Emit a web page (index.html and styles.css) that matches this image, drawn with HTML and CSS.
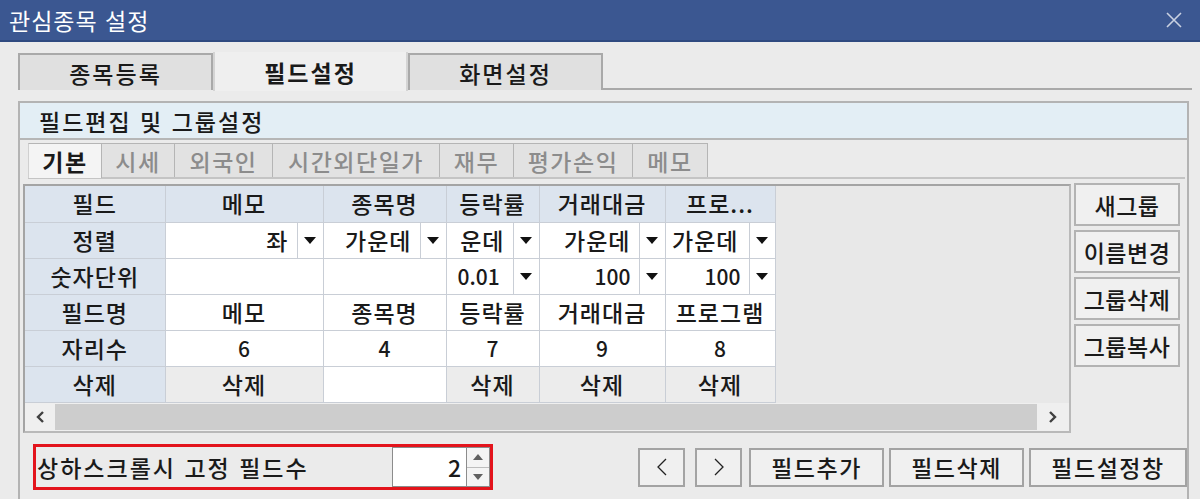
FILE: index.html
```html
<!DOCTYPE html>
<html lang="ko">
<head>
    <meta charset="UTF-8">
    <title>관심종목 설정</title>
    <link rel="stylesheet" href="styles.css">
</head>
<body>
    <div class="window">
        <div class="titlebar">
            <span class="title">관심종목 설정</span>
            <svg class="close" width="18" height="18" viewBox="0 0 18 18">
                <path d="M2 2 L16 16 M16 2 L2 16" stroke="#c9d1e2" stroke-width="1.6" fill="none"/>
            </svg>
        </div>

        <div class="tabs">
            <div class="tab">종목등록</div>
            <div class="tab active">필드설정</div>
            <div class="tab">화면설정</div>
        </div>

        <div class="panel">
            <div class="panel-head">필드편집 및 그룹설정</div>

            <div class="subtabs">
                <div class="subtab active" style="width: 74px">기본</div>
                <div class="subtab" style="width: 73px">시세</div>
                <div class="subtab" style="width: 98px">외국인</div>
                <div class="subtab" style="width: 167px">시간외단일가</div>
                <div class="subtab" style="width: 74px">재무</div>
                <div class="subtab" style="width: 119px">평가손익</div>
                <div class="subtab" style="width: 75px">메모</div>
            </div>

            <div class="editor">
                <div class="grid">
                    <div class="grid-body">
                        <table class="fields">
                            <colgroup>
                                <col style="width: 140px">
                                <col style="width: 158px">
                                <col style="width: 123px">
                                <col style="width: 93px">
                                <col style="width: 126px">
                                <col style="width: 110px">
                            </colgroup>
                            <tr class="head">
                                <th>필드</th>
                                <th>메모</th>
                                <th>종목명</th>
                                <th>등락률</th>
                                <th>거래대금</th>
                                <th>프로...</th>
                            </tr>
                            <tr>
                                <th>정렬</th>
                                <td class="combo"><div class="combo-box"><span class="combo-value">좌</span><span class="combo-arrow"></span></div></td>
                                <td class="combo"><div class="combo-box"><span class="combo-value">가운데</span><span class="combo-arrow"></span></div></td>
                                <td class="combo"><div class="combo-box"><span class="combo-value">운데</span><span class="combo-arrow"></span></div></td>
                                <td class="combo"><div class="combo-box"><span class="combo-value">가운데</span><span class="combo-arrow"></span></div></td>
                                <td class="combo"><div class="combo-box"><span class="combo-value tight">가운데</span><span class="combo-arrow"></span></div></td>
                            </tr>
                            <tr>
                                <th>숫자단위</th>
                                <td></td>
                                <td></td>
                                <td class="combo"><div class="combo-box"><span class="combo-value left num">0.01</span><span class="combo-arrow"></span></div></td>
                                <td class="combo"><div class="combo-box"><span class="combo-value num">100</span><span class="combo-arrow"></span></div></td>
                                <td class="combo"><div class="combo-box"><span class="combo-value num">100</span><span class="combo-arrow"></span></div></td>
                            </tr>
                            <tr>
                                <th>필드명</th>
                                <td>메모</td>
                                <td>종목명</td>
                                <td>등락률</td>
                                <td>거래대금</td>
                                <td>프로그램</td>
                            </tr>
                            <tr>
                                <th>자리수</th>
                                <td class="num">6</td>
                                <td class="num">4</td>
                                <td class="num">7</td>
                                <td class="num">9</td>
                                <td class="num">8</td>
                            </tr>
                            <tr>
                                <th>삭제</th>
                                <td class="del">삭제</td>
                                <td></td>
                                <td class="del">삭제</td>
                                <td class="del">삭제</td>
                                <td class="del">삭제</td>
                            </tr>
                        </table>
                    </div>
                    <div class="hscroll">
                        <div class="scroll-btn">
                            <svg width="10" height="14" viewBox="0 0 10 14"><path d="M8 2 L3 7 L8 12" stroke="#404040" stroke-width="2.4" fill="none"/></svg>
                        </div>
                        <div class="scroll-thumb"></div>
                        <div class="scroll-btn">
                            <svg width="10" height="14" viewBox="0 0 10 14"><path d="M2 2 L7 7 L2 12" stroke="#404040" stroke-width="2.4" fill="none"/></svg>
                        </div>
                    </div>
                </div>

                <div class="side-buttons">
                    <button class="btn">새그룹</button>
                    <button class="btn">이름변경</button>
                    <button class="btn">그룹삭제</button>
                    <button class="btn">그룹복사</button>
                </div>
            </div>

            <div class="footer">
                <div class="fixed-count">
                    <span class="fixed-label">상하스크롤시 고정 필드수</span>
                    <div class="spin">
                        <div class="spin-value">2</div>
                        <div class="spin-arrows">
                            <span class="spin-up"></span>
                            <span class="spin-down"></span>
                        </div>
                    </div>
                </div>

                <div class="nav-buttons">
                    <button class="btn arrow-btn">
                        <svg width="12" height="20" viewBox="0 0 12 20"><path d="M10 2 L2 10 L10 18" stroke="#222" stroke-width="1.3" fill="none"/></svg>
                    </button>
                    <button class="btn arrow-btn next">
                        <svg width="12" height="20" viewBox="0 0 12 20"><path d="M2 2 L10 10 L2 18" stroke="#222" stroke-width="1.3" fill="none"/></svg>
                    </button>
                    <button class="btn wide add">필드추가</button>
                    <button class="btn wide">필드삭제</button>
                    <button class="btn wider">필드설정창</button>
                </div>
            </div>
        </div>
    </div>
</body>
</html>
```

FILE: styles.css
```css
:root {
    --title: #3b5791;
    --window: #ebebeb;
    --tab: #e0e0e0;
    --tab-border: #a9a9a9;
    --panel-head: #e3eef5;
    --cell-head: #dce4ee;
    --cell-line: #c9ced6;
    --cell-gray: #ececec;
    --grid-empty: #e8e8e8;
    --thumb: #cdcdcd;
    --button: #f0f0f0;
    --button-border: #a3a3a3;
    --text: #1a1a1a;
    --muted: #8c8c8c;
    --red: #e3141c;
}

* {
    margin: 0;
    padding: 0;
    box-sizing: border-box;
}

body {
    font-family: "Noto Sans CJK KR", "Noto Sans", sans-serif;
    font-weight: 500;
    background-color: var(--window);
    color: var(--text);
    width: 1200px;
    height: 499px;
    overflow: hidden;
}

.window {
    height: 499px;
    overflow: hidden;
}

.titlebar {
    height: 42px;
    background: var(--title);
    border-bottom: 2px solid #2f4a80;
    display: flex;
    align-items: center;
    justify-content: space-between;
    padding: 0 17px 0 9px;
}

.title {
    color: #ffffff;
    font-size: 23px;
    font-weight: 400;
    letter-spacing: 1px;
    line-height: 1;
}

/* main tabs */
.tabs {
    display: flex;
    margin: 11px 0 0 18px;
    width: 1174px;
    height: 37px;
    border-bottom: 2px solid var(--tab-border);
}

.tab {
    width: 195px;
    height: 37px;
    background: var(--tab);
    border: 2px solid var(--tab-border);
    border-bottom: none;
    display: flex;
    align-items: center;
    justify-content: center;
    font-size: 23px;
    letter-spacing: 2px;
}

.tab.active {
    background: #efefef;
    font-weight: 700;
    height: 39px;
    margin-top: -1px;
    border-color: #d4d4d4;
    border-top: none;
}

/* panel */
.panel {
    margin: 11px 0 0 18px;
    width: 1171px;
    height: 420px;
    border: 2px solid #b3b3b3;
    background: var(--window);
}

.panel-head {
    height: 37px;
    background: var(--panel-head);
    border-bottom: 2px solid #b6b6b6;
    display: flex;
    align-items: center;
    padding-left: 19px;
    font-size: 23px;
    letter-spacing: 2px;
}

.subtabs {
    display: flex;
    margin: 3px 0 0 8px;
    height: 36px;
    width: 1157px;
    border-bottom: 2px solid #c4c4c4;
}

.subtab {
    height: 34px;
    background: #e2e2e2;
    border: 1px solid #b5b5b5;
    border-bottom: none;
    border-left: none;
    display: flex;
    align-items: center;
    justify-content: center;
    font-size: 23px;
    letter-spacing: 1.5px;
    color: var(--muted);
}

.subtab.active {
    background: #f4f4f4;
    color: var(--text);
    font-weight: 700;
    border-left: 1px solid #d0d0d0;
    height: 35px;
}

/* field grid */
.editor {
    display: flex;
    gap: 3px;
    margin: 5px 0 0 3px;
}

.grid {
    width: 1048px;
    height: 249px;
    border: 2px solid #a4a4a4;
    border-right-color: #b9b9b9;
    border-bottom-color: #b9b9b9;
    display: flex;
    flex-direction: column;
}

.grid-body {
    flex: 1;
    background: var(--grid-empty);
}

.fields {
    border-collapse: collapse;
    table-layout: fixed;
    width: 750px;
    font-size: 23px;
    letter-spacing: 1px;
}

.fields th,
.fields td {
    height: 36px;
    border: 1px solid var(--cell-line);
    text-align: center;
    font-weight: 500;
    padding: 0;
    background: #ffffff;
    white-space: nowrap;
    overflow: hidden;
    line-height: 1;
}

.fields tr:first-child th {
    border-top: none;
}

.fields th:first-child {
    border-left: none;
}

.fields th,
.fields .head th {
    background: var(--cell-head);
}

.fields td.del {
    background: var(--cell-gray);
}

.fields td.num,
.combo-value.num {
    font-size: 21px;
    letter-spacing: 0;
}

.combo-box {
    display: flex;
    height: 35px;
    align-items: stretch;
}

.combo-value {
    flex: 1;
    display: flex;
    align-items: center;
    justify-content: flex-end;
    padding-right: 8px;
    overflow: hidden;
}

.combo-value.left {
    justify-content: flex-start;
    padding-left: 11px;
}

.combo-value.tight {
    padding-right: 10px;
}

.combo-arrow {
    width: 26px;
    border-left: 1px solid var(--cell-line);
    display: flex;
    align-items: center;
    justify-content: center;
}

.combo-arrow::after {
    content: "";
    border-left: 6px solid transparent;
    border-right: 6px solid transparent;
    border-top: 7px solid #111111;
}

/* horizontal scrollbar */
.hscroll {
    height: 31px;
    display: flex;
    background: #efefef;
}

.scroll-btn {
    width: 30px;
    display: flex;
    align-items: center;
    justify-content: center;
}

.scroll-btn:last-child {
    width: 32px;
}

.scroll-thumb {
    flex: 1;
    background: var(--thumb);
    margin: 1px 0;
}

/* group buttons */
.btn {
    font-family: inherit;
    font-weight: 500;
    font-size: 23px;
    letter-spacing: 1.5px;
    color: var(--text);
    background: var(--button);
    border: 2px solid var(--button-border);
    display: flex;
    align-items: center;
    justify-content: center;
}

.side-buttons {
    display: flex;
    flex-direction: column;
    gap: 4px;
    width: 106px;
    margin-top: -1px;
}

.side-buttons .btn {
    height: 43px;
    border-width: 2px;
    border-color: #b3b3b3;
    letter-spacing: 0.5px;
}

/* footer */
.footer {
    display: flex;
    justify-content: space-between;
    align-items: center;
    margin: 11px 0 0 13px;
}

.fixed-count {
    width: 460px;
    height: 46px;
    border: 3px solid var(--red);
    display: flex;
    align-items: stretch;
    justify-content: space-between;
    padding: 0 0 0 1px;
}

.fixed-label {
    display: flex;
    align-items: center;
    font-size: 23px;
    letter-spacing: 2px;
}

.spin {
    display: flex;
}

.spin-value {
    width: 74px;
    background: #ffffff;
    border: 1px solid #8c8c8c;
    border-right: none;
    display: flex;
    align-items: center;
    justify-content: flex-end;
    padding-right: 5px;
    font-size: 23px;
}

.spin-arrows {
    width: 24px;
    border: 1px solid #8c8c8c;
    background: #f4f4f4;
    display: flex;
    flex-direction: column;
}

.spin-up,
.spin-down {
    flex: 1;
    display: flex;
    align-items: center;
    justify-content: center;
}

.spin-up {
    border-bottom: 1px solid #bdbdbd;
}

.spin-up::after {
    content: "";
    border-left: 5px solid transparent;
    border-right: 5px solid transparent;
    border-bottom: 6px solid #606060;
}

.spin-down::after {
    content: "";
    border-left: 5px solid transparent;
    border-right: 5px solid transparent;
    border-top: 6px solid #606060;
}

.nav-buttons {
    display: flex;
    gap: 5px;
}

.nav-buttons .btn {
    height: 39px;
}

.arrow-btn {
    width: 47px;
}

.arrow-btn.next {
    margin-left: 5px;
}

.wide.add {
    margin-left: 2px;
}

.wide {
    width: 135px;
}

.wider {
    width: 158px;
}
```
